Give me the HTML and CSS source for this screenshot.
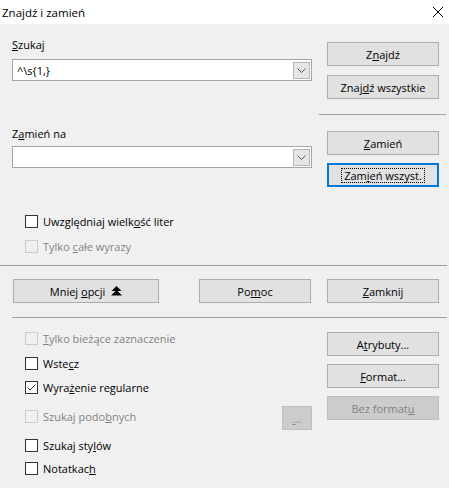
FILE: index.html
```html
<!DOCTYPE html>
<html lang="pl">
<head>
    <meta charset="UTF-8">
    <meta name="viewport" content="width=device-width, initial-scale=1.0">
    <title>Znajdź i zamień</title>
    <link rel="stylesheet" href="styles.css">
</head>
<body>

    <div class="dialog">
        <div class="titlebar">
            <span class="title">Znajdź i zamień</span>
            <svg class="close" width="12" height="12" viewBox="0 0 12 12">
                <path d="M1 1 L11 11 M11 1 L1 11" stroke="#000" stroke-width="1" fill="none"/>
            </svg>
        </div>

        <div class="content">
            <!-- szukaj -->
            <div class="section find">
                <div class="field">
                    <div class="label"><u>S</u>zukaj</div>
                    <div class="combo">
                        <span class="value">^\s{1,}</span>
                        <span class="drop">
                            <svg width="9" height="5" viewBox="0 0 9 5"><path d="M0.5 0.5 L4.5 4.5 L8.5 0.5" stroke="#555" fill="none"/></svg>
                        </span>
                    </div>
                </div>
                <div class="actions">
                    <button class="btn">Z<u>n</u>ajdź</button>
                    <button class="btn">Znaj<u>d</u>ź wszystkie</button>
                </div>
            </div>

            <div class="split"></div>

            <!-- zamień -->
            <div class="section replace">
                <div class="field">
                    <div class="label">Z<u>a</u>mień na</div>
                    <div class="combo">
                        <span class="value"></span>
                        <span class="drop">
                            <svg width="9" height="5" viewBox="0 0 9 5"><path d="M0.5 0.5 L4.5 4.5 L8.5 0.5" stroke="#555" fill="none"/></svg>
                        </span>
                    </div>
                </div>
                <div class="actions">
                    <button class="btn"><u>Z</u>amień</button>
                    <button class="btn focused"><span class="focus-ring">Zam<u>i</u>eń wszyst.</span></button>
                </div>
            </div>

            <div class="checks">
                <div class="check"><span class="box"></span><span>Uwzględniaj wielk<u>o</u>ść liter</span></div>
                <div class="check disabled"><span class="box"></span><span>Tylko <u>c</u>ałe wyrazy</span></div>
            </div>

            <div class="rule full"></div>

            <div class="button-row">
                <button class="btn wide"><span>Mniej <u>o</u>pcji</span>
                    <svg class="more-icon" width="11" height="10" viewBox="0 0 11 10">
                        <path d="M5.5 0 L10.5 5 L0.5 5 Z M5.5 4 L11 9.5 L0 9.5 Z" fill="#000"/>
                    </svg>
                </button>
                <button class="btn help">Po<u>m</u>oc</button>
                <button class="btn close-btn"><u>Z</u>amknij</button>
            </div>

            <div class="rule"></div>

            <!-- więcej opcji -->
            <div class="section more">
                <div class="options">
                    <div class="check disabled row-a"><span class="box"></span><span><u>T</u>ylko bieżące zaznaczenie</span></div>
                    <div class="check row-a"><span class="box"></span><span>Wste<u>c</u>z</span></div>
                    <div class="check row-b"><span class="box checked">
                        <svg width="11" height="11" viewBox="0 0 11 11"><path d="M1.5 5.5 L4 8 L9.5 2.5" stroke="#333" stroke-width="1" fill="none"/></svg>
                    </span><span>Wyra<u>ż</u>enie regularne</span></div>
                    <div class="check disabled row-c">
                        <span class="box"></span><span>Szukaj podo<u>b</u>nych</span>
                        <button class="btn dots" disabled><u>.</u>..</button>
                    </div>
                    <div class="check row-b"><span class="box"></span><span>Szukaj sty<u>l</u>ów</span></div>
                    <div class="check row-b"><span class="box"></span><span>Notatkac<u>h</u></span></div>
                </div>
                <div class="actions">
                    <button class="btn">A<u>t</u>rybuty...</button>
                    <button class="btn"><u>F</u>ormat...</button>
                    <button class="btn" disabled>Bez format<u>u</u></button>
                </div>
            </div>
        </div>
    </div>

</body>
</html>
```

FILE: styles.css
```css
body {
    margin: 0;
    padding: 0;
    font-family: 'Open Sans', 'Liberation Sans', sans-serif;
    font-size: 11px;
    color: #000;
}

.dialog {
    width: 449px;
    height: 488px;
    background-color: #f0f0f0;
    overflow: hidden;
}

.titlebar {
    height: 24px;
    background-color: #fff;
    display: flex;
    align-items: center;
    justify-content: space-between;
    padding: 0 5px 0 2px;
}

.title {
    font-size: 11.5px;
}

.close {
    display: block;
}

.section {
    display: flex;
    margin-left: 12px;
}

.field {
    width: 300px;
}

.label {
    line-height: 16px;
}

.find .field {
    margin-top: 13px;
}

.find .label {
    margin-bottom: 6px;
}

.replace .field {
    margin-top: 11px;
}

.replace .label {
    margin-bottom: 4px;
}

.combo {
    height: 22px;
    box-sizing: border-box;
    border: 1px solid #a5a5a5;
    background-color: #fff;
    display: flex;
    align-items: center;
    justify-content: space-between;
    padding: 0 1px 0 4px;
}

.drop {
    width: 17px;
    height: 17px;
    box-sizing: border-box;
    border: 1px solid #b4b4b4;
    background-color: #e6e6e6;
    display: flex;
    align-items: center;
    justify-content: center;
}

.actions {
    display: flex;
    flex-direction: column;
    gap: 8px;
    margin-left: 15px;
}

.find .actions {
    margin-top: 18px;
    gap: 9px;
}

.replace .actions {
    margin-top: 16px;
}

.btn {
    width: 112px;
    height: 24px;
    box-sizing: border-box;
    background-color: #e1e1e1;
    border: 1px solid #adadad;
    font-family: inherit;
    font-size: 11px;
    color: #000;
    padding: 0;
    display: flex;
    align-items: center;
    justify-content: center;
}

.btn:disabled {
    background-color: #cccccc;
    border-color: #bfbfbf;
    color: #838383;
}

.btn.focused {
    border: 2px solid #0078d7;
}

.focus-ring {
    outline: 1px dotted #000;
    padding: 0 2px;
    line-height: 13px;
}

.split {
    margin: 15px 0 0 319px;
    width: 127px;
    height: 1px;
    background-color: #a0a0a0;
}

.checks {
    margin: 22px 0 0 25px;
}

.check {
    display: flex;
    align-items: center;
    height: 25px;
}

.box {
    width: 13px;
    height: 13px;
    box-sizing: border-box;
    border: 1px solid #333;
    background-color: #fff;
    margin-right: 5px;
    display: flex;
    align-items: center;
    justify-content: center;
}

.check.disabled {
    color: #838383;
}

.check.disabled .box {
    border-color: #cccccc;
    background-color: #f0f0f0;
}

.rule {
    height: 1px;
    background-color: #a0a0a0;
    margin: 14px 2px 0 12px;
}

.rule.full {
    margin: 6px 2px 0 0;
}

.button-row {
    display: flex;
    margin: 13px 0 0 13px;
}

.btn.wide {
    width: 146px;
    gap: 6px;
}

.more-icon {
    display: block;
}

.btn.help {
    margin-left: 40px;
}

.btn.close-btn {
    margin-left: 16px;
}

.more .options {
    width: 287px;
    margin: 8px 0 0 13px;
}

.more .actions {
    margin-top: 14px;
}

.check.row-b {
    height: 23px;
}

.check.row-c {
    height: 35px;
}

.btn.dots {
    width: 30px;
    margin-left: auto;
    margin-top: 3px;
}
```
